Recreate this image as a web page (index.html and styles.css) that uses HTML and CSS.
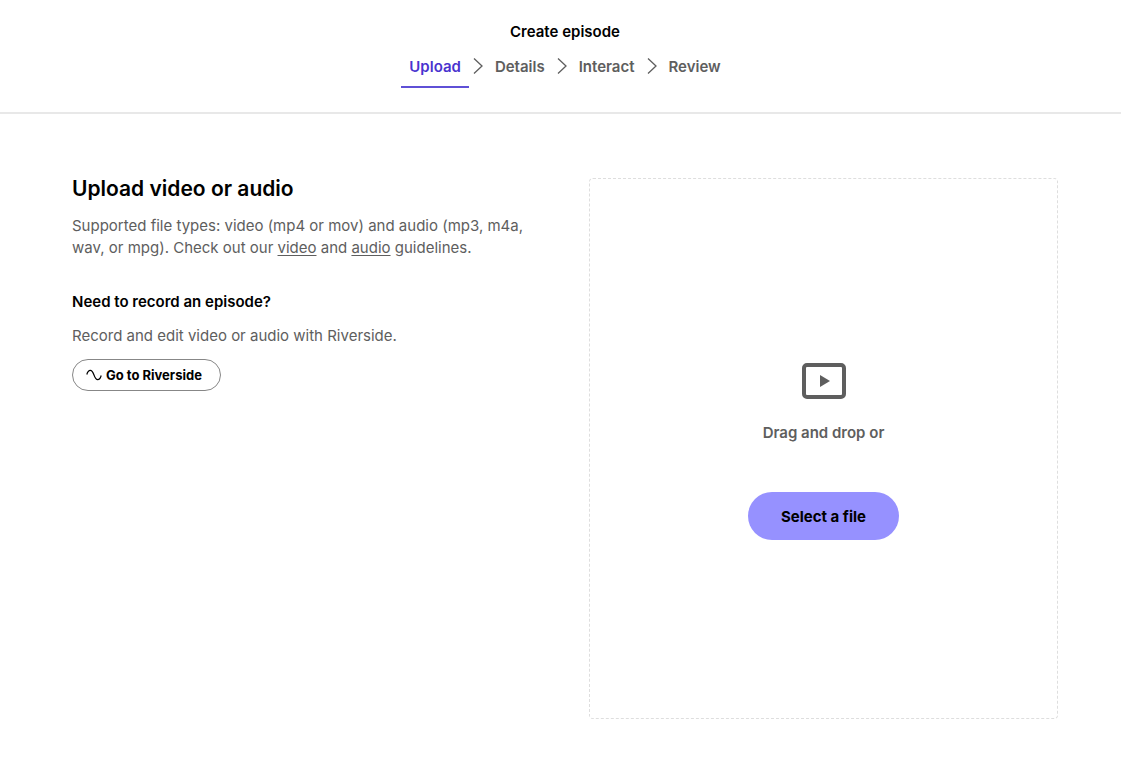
FILE: index.html
```html
<!DOCTYPE html>
<html lang="en">
<head>
    <meta charset="UTF-8">
    <meta name="viewport" content="width=device-width, initial-scale=1.0">
    <title>Create episode</title>
    <link rel="stylesheet" href="styles.css">
</head>
<body>

<header class="header">
    <h1 class="header-title">Create episode</h1>
    <nav class="steps" aria-label="Steps">
        <a class="step active" href="#upload">Upload</a>
        <svg class="step-arrow" viewBox="0 0 16 16" aria-hidden="true"><path d="M4 .5 12 8 4 15.500"/></svg>
        <a class="step" href="#details">Details</a>
        <svg class="step-arrow" viewBox="0 0 16 16" aria-hidden="true"><path d="M4 .5 12 8 4 15.500"/></svg>
        <a class="step" href="#interact">Interact</a>
        <svg class="step-arrow" viewBox="0 0 16 16" aria-hidden="true"><path d="M4 .5 12 8 4 15.500"/></svg>
        <a class="step" href="#review">Review</a>
    </nav>
</header>

<main class="container" id="upload">
    <!-- Left column -->
    <section class="info">
        <h2 class="info-title">Upload video or audio</h2>
        <p class="info-text">Supported file types: video (mp4 or mov) and audio (mp3, m4a, wav, or mpg). Check out our <a href="#video">video</a> and <a href="#audio">audio</a> guidelines.</p>

        <h3 class="record-title">Need to record an episode?</h3>
        <p class="info-text">Record and edit video or audio with Riverside.</p>
        <button type="button" class="riverside-button">
            <svg viewBox="0 0 16 16" aria-hidden="true"><path d="M.8 7.500C1.500 5 2.500 3.300 4.300 3.300 8.300 3.300 7.700 12.700 11.700 12.700c1.800 0 2.800-1.700 3.500-4.200"/></svg>
            Go to Riverside
        </button>
    </section>

    <!-- Drop area -->
    <section class="dropzone">
        <svg class="video-icon" viewBox="0 0 44 36" aria-hidden="true">
            <rect x="2" y="2" width="40" height="32" rx="3"/>
            <path d="M18 12v12l10-6z"/>
        </svg>
        <p class="dropzone-text">Drag and drop or</p>
        <button type="button" class="select-button">Select a file</button>
    </section>
</main>

</body>
</html>
```

FILE: styles.css
```css
* {
    box-sizing: border-box;
}

body {
    margin: 0;
    background-color: #fff;
    color: #000;
    font-family: Inter, "Liberation Sans", sans-serif;
    font-size: 15px;
    line-height: 22px;
}

h1, h2, h3, p {
    margin: 0;
}

button {
    font-family: inherit;
    cursor: pointer;
}

/* Header */
.header {
    padding: 21px 0 24px 9px;
    border-bottom: 2px solid #e8e8e8;
    text-align: center;
}

.header-title {
    font-size: 15px;
    font-weight: 600;
}

.steps {
    display: flex;
    justify-content: center;
    gap: 1px;
    margin-top: 2px;
}

.step {
    padding: 11px 8px 8px;
    border-bottom: 2px solid transparent;
    color: #5e5e5e;
    font-weight: 600;
    text-decoration: none;
}

.step.active {
    border-color: #5f50d6;
    color: #4a33cf;
}

.step-arrow {
    width: 16px;
    height: 16px;
    margin-top: 13px;
    fill: none;
    stroke: #5e5e5e;
    stroke-width: 1.3;
}

/* Content */
.container {
    display: grid;
    grid-template-columns: 1fr 1fr;
    gap: 48px;
    padding: 64px 63px 60px 72px;
}

.info-title {
    margin-bottom: 16px;
    font-size: 21px;
    font-weight: 600;
    line-height: 21px;
}

.info-text {
    color: #5e5e5e;
}

.info-text a {
    color: inherit;
    text-underline-offset: 2px;
}

.record-title {
    margin: 32px 0 12px;
    font-size: 15px;
    font-weight: 600;
    line-height: 22px;
}

.riverside-button {
    display: flex;
    align-items: center;
    gap: 4px;
    height: 32px;
    margin-top: 12px;
    padding: 0 18px 0 13px;
    border: 1px solid #878787;
    border-radius: 16px;
    background-color: #fff;
    color: #000;
    font-size: 13px;
    font-weight: 700;
}

.riverside-button svg {
    width: 16px;
    height: 16px;
    fill: none;
    stroke: #000;
    stroke-width: 1.2;
}

/* Drop area */
.dropzone {
    display: flex;
    flex-direction: column;
    align-items: center;
    justify-content: center;
    min-height: calc(100vh - 239px);
    padding: 24px 24px 18px;
    border: 1px dashed #dedede;
    border-radius: 4px;
}

.video-icon {
    width: 44px;
    height: 36px;
    fill: #5e5e5e;
}

.video-icon rect {
    fill: none;
    stroke: #5e5e5e;
    stroke-width: 4;
}

.dropzone-text {
    margin: 23px 0 48px;
    color: #5e5e5e;
    font-weight: 600;
}

.select-button {
    height: 48px;
    padding: 0 33px;
    border: none;
    border-radius: 24px;
    background-color: #9691ff;
    color: #000;
    font-size: 15px;
    font-weight: 700;
}

/* Small screens */
@media (max-width: 768px) {
    .container {
        grid-template-columns: 1fr;
        padding: 32px 24px;
    }
}
```
